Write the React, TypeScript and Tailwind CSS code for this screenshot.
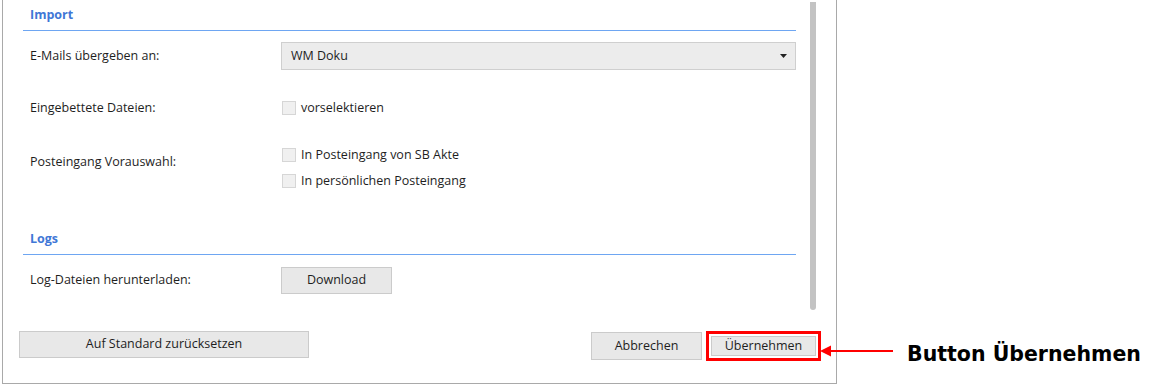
import React from 'react';

const font = { fontFamily: '"Open Sans", "Noto Sans", sans-serif' };

function SectionHeading({ title }: { title: string }) {
  return (
    <div className="h-[31px] flex items-center pl-[7px] border-b border-[#6ea6f2]">
      <span className="text-[12.5px] font-bold text-[#3f77d6]">{title}</span>
    </div>
  );
}

function Checkbox({ label }: { label: string }) {
  return (
    <div className="flex items-center h-[14px]">
      <div className="w-[14px] h-[14px] ml-[1px] bg-[#f0f0f0] border border-[#d6d6d6]" />
      <span className="ml-[5px] text-[12.5px] text-[#1e1e1e] whitespace-nowrap">{label}</span>
    </div>
  );
}

function GrayButton({ children, className }: { children: React.ReactNode; className: string }) {
  return (
    <button
      className={
        'flex items-center justify-center bg-[#e8e8e8] border border-[#cbcbcb] text-[12.5px] text-[#1e1e1e] ' +
        className
      }
    >
      {children}
    </button>
  );
}

export default function App() {
  // labels column is 258px wide, controls begin at x=281
  return (
    <div className="relative w-[1149px] h-[386px] bg-white overflow-hidden" style={font}>
      <div className="ml-[2px] w-[835px] h-[384px] border-l border-r border-b border-[#a9a9a9] flex flex-col">
        <div className="flex h-[312px]">
          {/* scroll content */}
          <div className="ml-[20px] w-[773px] flex flex-col">
            <SectionHeading title="Import" />

            <div className="mt-[11px] flex items-center h-[28px]">
              <div className="w-[258px] pl-[7px] text-[12.5px] text-[#1e1e1e]">E-Mails übergeben an:</div>
              <div className="flex-1 h-[28px] bg-[#ececec] border border-[#cfcfcf] flex items-center justify-between pl-[9px] pr-[8px]">
                <span className="text-[12.5px] text-[#1e1e1e]">WM Doku</span>
                <svg width="7" height="4" viewBox="0 0 7 4">
                  <path d="M0 0 H7 L3.5 4 Z" fill="#222" />
                </svg>
              </div>
            </div>

            <div className="mt-[31px] flex items-center h-[14px]">
              <div className="w-[258px] pl-[7px] text-[12.5px] text-[#1e1e1e]">Eingebettete Dateien:</div>
              <Checkbox label="vorselektieren" />
            </div>

            <div className="mt-[33px] flex">
              <div className="w-[258px] pl-[7px] pt-[6px] text-[12.5px] leading-[16px] text-[#1e1e1e]">
                Posteingang Vorauswahl:
              </div>
              <div className="flex flex-col gap-[12px]">
                <Checkbox label="In Posteingang von SB Akte" />
                <Checkbox label="In persönlichen Posteingang" />
              </div>
            </div>

            <div className="mt-[36px]">
              <SectionHeading title="Logs" />
            </div>

            <div className="mt-[12px] flex items-center h-[27px]">
              <div className="w-[258px] pl-[7px] text-[12.5px] text-[#1e1e1e]">Log-Dateien herunterladen:</div>
              <GrayButton className="w-[111px] h-[27px]">Download</GrayButton>
            </div>
          </div>

          {/* scrollbar */}
          <div className="ml-[14px] mt-[2px] w-[6px] h-[308px] bg-[#c3c3c3] rounded-b-[3px]" />
        </div>

        {/* footer buttons */}
        <div className="flex items-start mt-[19px]">
          <GrayButton className="ml-[16px] w-[290px] h-[27px]">Auf Standard zurücksetzen</GrayButton>
          <GrayButton className="ml-[282px] mt-[1px] w-[111px] h-[28px]">Abbrechen</GrayButton>
          <div className="ml-[4px] w-[115px] h-[30px] border-[3px] border-[#ff0000] p-[2px] bg-white">
            <GrayButton className="w-full h-full">Übernehmen</GrayButton>
          </div>
        </div>
      </div>

      {/* annotation arrow */}
      <svg className="absolute left-[819px] top-[344px]" width="76" height="14" viewBox="0 0 76 14">
        <path d="M74 7 H10" stroke="#ff0000" strokeWidth="2" />
        <path d="M1 7 L12 1.5 L12 12.5 Z" fill="#ff0000" />
      </svg>

      <div
        className="absolute left-[907px] top-[339px] text-[20.5px] font-bold text-black whitespace-nowrap"
        style={{ fontFamily: '"DejaVu Sans", Verdana, sans-serif' }}
      >
        Button Übernehmen
      </div>
    </div>
  );
}
